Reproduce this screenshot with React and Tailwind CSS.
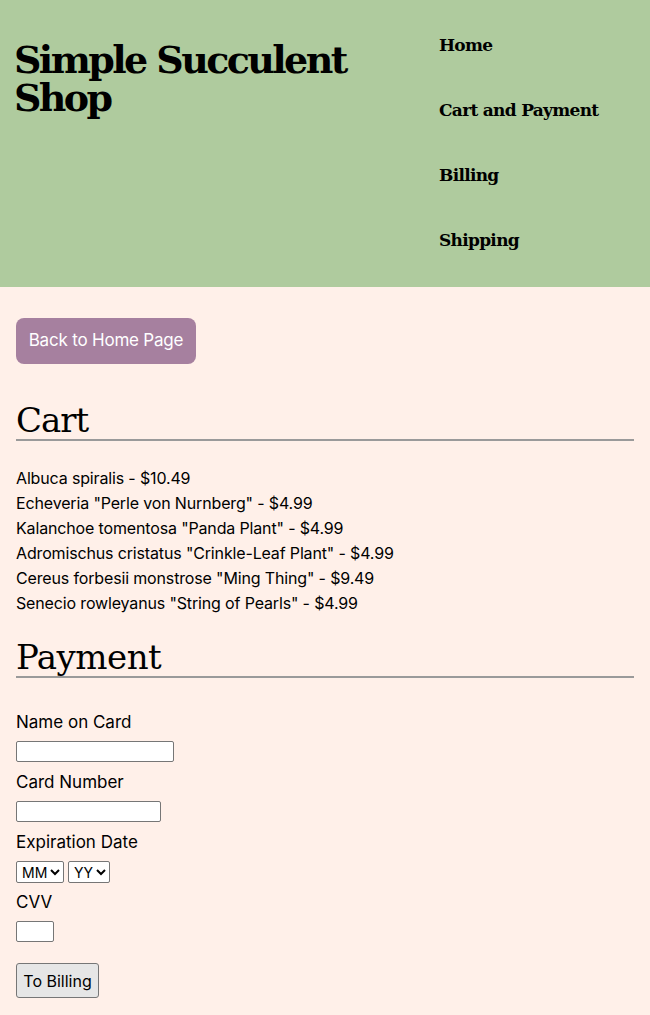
export default function App() {
  const cart = [
    'Albuca spiralis - $10.49',
    'Echeveria "Perle von Nurnberg" - $4.99',
    'Kalanchoe tomentosa "Panda Plant" - $4.99',
    'Adromischus cristatus "Crinkle-Leaf Plant" - $4.99',
    'Cereus forbesii monstrose "Ming Thing" - $9.49',
    'Senecio rowleyanus "String of Pearls" - $4.99',
  ];

  return (
    <div className="min-h-screen bg-[#fff0e9] text-black font-['Inter',sans-serif]">
      {/* header */}
      <header className="h-[287px] bg-[#afcb9e] flex">
        <h1 className="w-[439px] px-[14px] pt-[41px] font-['DejaVu_Serif',serif] text-[38px] leading-[38px] font-bold tracking-[-2.6px]">
          Simple Succulent Shop
        </h1>
        <nav className="flex flex-col pt-[35px] gap-[44px] font-['DejaVu_Serif',serif] font-bold text-[17px] leading-[21px] tracking-[-0.7px]">
          <a>Home</a>
          <a>Cart and Payment</a>
          <a>Billing</a>
          <a>Shipping</a>
        </nav>
      </header>

      <main className="px-4 pt-[31px] pb-4">
        <button className="h-[46px] w-[180px] rounded-lg bg-[#a6809f] text-white text-[17px] tracking-[-0.2px]">
          Back to Home Page
        </button>

        <h2 className="mt-[38px] font-['DejaVu_Serif',serif] text-[34px] leading-[37px] tracking-[-1px] border-b-2 border-[#9a9a9a]">
          Cart
        </h2>
        <ul className="mt-[25px] text-[16px] leading-[25px] tracking-[-0.15px]">
          {cart.map((c) => (
            <li key={c}>{c}</li>
          ))}
        </ul>

        <h2 className="mt-[23px] font-['DejaVu_Serif',serif] text-[34px] leading-[37px] tracking-[-0.5px] border-b-2 border-[#9a9a9a]">
          Payment
        </h2>

        <form className="mt-[34px] flex flex-col items-start text-[17px] leading-[20px]">
          <label>Name on Card</label>
          <input className="mt-[9px] mb-[10px] h-[21px] w-[158px] bg-white border border-[#767676] rounded-[2px]" />
          <label>Card Number</label>
          <input className="mt-[9px] mb-[10px] h-[21px] w-[145px] bg-white border border-[#767676] rounded-[2px]" />
          <label>Expiration Date</label>
          <div className="mt-[9px] mb-[9px] flex gap-[4px]">
            <select className="h-[22px] w-[48px] bg-white border border-[#767676] rounded-[2px] text-[14px] leading-[18px] pl-[1px]">
              <option>MM</option>
            </select>
            <select className="h-[22px] w-[42px] bg-white border border-[#767676] rounded-[2px] text-[14px] leading-[18px] pl-[1px]">
              <option>YY</option>
            </select>
          </div>
          <label>CVV</label>
          <input className="mt-[9px] h-[21px] w-[38px] bg-white border border-[#767676] rounded-[2px]" />
          <button type="button" className="mt-[21px] h-[35px] w-[83px] bg-[#e6e6e6] border border-[#767676] rounded-[3px] text-[16px]">
            To Billing
          </button>
        </form>
      </main>
    </div>
  );
}
